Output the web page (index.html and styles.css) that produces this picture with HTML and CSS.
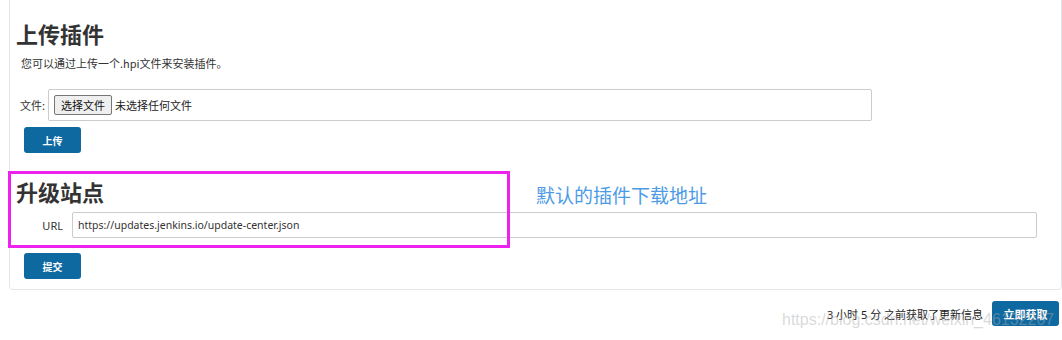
FILE: index.html
```html
<!DOCTYPE html>
<html lang="zh-CN">
<head>
<meta charset="utf-8">
<title>插件管理 - 高级</title>
<link rel="stylesheet" href="styles.css">
</head>
<body>
<div class="page">
  <section class="panel">
    <h2 class="title">上传插件</h2>
    <p class="desc">您可以通过上传一个.hpi文件来安装插件。</p>
    <div class="file-row">
      <span class="file-label">文件:</span>
      <div class="file-box">
        <span class="file-btn">选择文件</span>
        <span class="file-none">未选择任何文件</span>
      </div>
    </div>
    <button class="btn btn-upload">上传</button>

    <h2 class="title title-site">升级站点</h2>
    <div class="url-row">
      <span class="url-label">URL</span>
      <div class="url-input">https://updates.jenkins.io/update-center.json</div>
    </div>
    <button class="btn btn-submit">提交</button>
  </section>

  <div class="footer-row">
    <span class="updated">3 小时 5 分 之前获取了更新信息</span>
    <button class="btn btn-fetch">立即获取</button>
  </div>

  <div class="highlight"></div>
  <div class="note">默认的插件下载地址</div>
  <div class="watermark">https://blog.csdn.net/weixin_46132207</div>
</div>
</body>
</html>
```

FILE: styles.css
```css
* { box-sizing: border-box; }

html, body {
  margin: 0;
  padding: 0;
  background: #ffffff;
}

body {
  font-family: "Noto Sans", "Noto Sans CJK SC", sans-serif;
  color: #333333;
  font-size: 11px;
  width: 1062px;
  height: 340px;
  overflow: hidden;
}

.page {
  position: relative;
  display: flow-root;
  height: 340px;
}

.panel {
  margin: -10px 0 0 9px;
  width: 1053px;
  border: 1px solid #e3e7eb;
  border-radius: 4px;
  padding: 29px 0 10px 0;
  background: #ffffff;
}

.title {
  margin: 0 0 0 6px;
  font-family: "Noto Sans CJK SC", sans-serif;
  font-size: 22px;
  line-height: 26px;
  font-weight: 700;
  color: #333333;
}

.desc {
  margin: 9px 0 0 11px;
  font-family: "Noto Sans CJK SC", sans-serif;
  font-size: 11px;
  line-height: 16px;
  color: #333333;
}

.file-row {
  display: flex;
  align-items: center;
  margin: 18px 0 0 10px;
  height: 32px;
}

.file-label {
  font-family: "Noto Sans CJK SC", sans-serif;
  font-size: 11px;
  width: 28px;
  color: #333333;
}

.file-box {
  display: flex;
  align-items: center;
  width: 824px;
  height: 32px;
  border: 1px solid #cccccc;
  border-radius: 2px;
  padding-left: 5px;
}

.file-btn {
  display: inline-flex;
  align-items: center;
  justify-content: center;
  width: 58px;
  height: 20px;
  border: 1px solid #767676;
  border-radius: 2px;
  background: #efefef;
  font-family: "Noto Sans CJK SC", sans-serif;
  font-size: 11px;
  color: #111111;
}

.file-none {
  margin-left: 3px;
  font-family: "Noto Sans CJK SC", sans-serif;
  font-size: 11px;
  color: #222222;
}

.btn {
  display: flex;
  align-items: center;
  justify-content: center;
  width: 57px;
  height: 26px;
  padding: 0;
  border: none;
  border-radius: 3px;
  background: #0e69a0;
  color: #ffffff;
  font-family: "Noto Sans CJK SC", sans-serif;
  font-size: 10px;
  font-weight: 700;
}

.btn-upload,
.btn-submit {
  margin-left: 14px;
}

.btn-upload { margin-top: 6px; }

.title-site { margin-top: 25px; }

.url-row {
  display: flex;
  align-items: center;
  margin: 8px 0 0 0;
  height: 26px;
}

.url-label {
  width: 62px;
  padding-right: 9px;
  text-align: right;
  font-size: 11px;
  color: #333333;
}

.url-input {
  display: flex;
  align-items: center;
  width: 965px;
  height: 26px;
  border: 1px solid #cccccc;
  border-radius: 2px;
  padding-left: 5px;
  font-size: 10.5px;
  color: #333333;
}

.btn-submit { margin-top: 15px; }

.footer-row {
  display: flex;
  justify-content: flex-end;
  align-items: center;
  gap: 9px;
  margin: 11px 3px 0 0;
  height: 25px;
}

.updated {
  font-family: "Noto Sans", "Noto Sans CJK SC", sans-serif;
  font-size: 11px;
  color: #222222;
}

.btn-fetch {
  width: 67px;
  height: 25px;
  font-size: 11px;
}

.highlight {
  position: absolute;
  left: 8px;
  top: 171px;
  width: 502px;
  height: 77px;
  border: 3px solid #ee22ee;
}

.note {
  position: absolute;
  left: 536px;
  top: 184px;
  font-family: "Noto Sans CJK SC", sans-serif;
  font-size: 19px;
  line-height: 22px;
  color: #4d9be6;
}

.watermark {
  position: absolute;
  left: 782px;
  top: 311px;
  font-family: "Liberation Sans", Arial, sans-serif;
  font-size: 16px;
  line-height: 18px;
  color: rgba(170, 170, 170, 0.45);
  white-space: nowrap;
  pointer-events: none;
}
```
